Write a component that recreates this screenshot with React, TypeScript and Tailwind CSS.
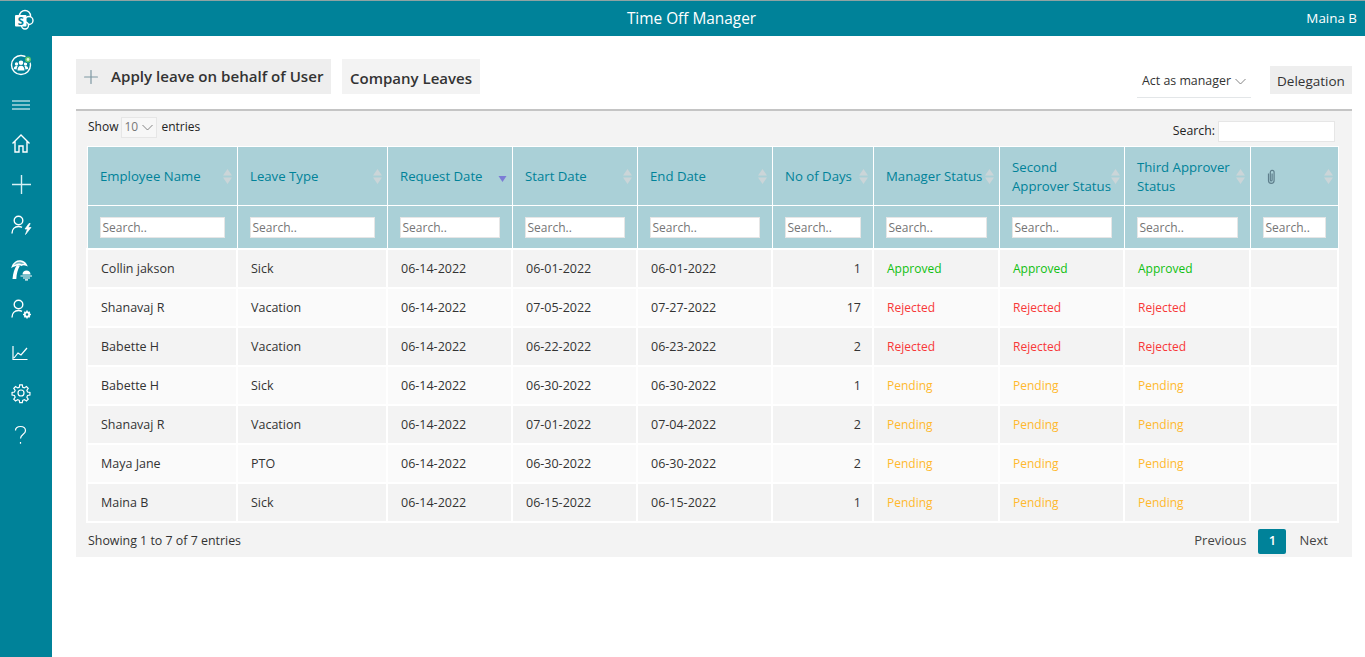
import React from 'react';
import { Plus } from 'lucide-react';

const columns = [
  { label: 'Employee Name', width: 'w-[150px]', input: 'w-[125px]' },
  { label: 'Leave Type', width: 'w-[150px]', input: 'w-[125px]' },
  { label: 'Request Date', width: 'w-[125px]', input: 'w-[100px]', sorted: true },
  { label: 'Start Date', width: 'w-[125px]', input: 'w-[100px]' },
  { label: 'End Date', width: 'w-[135px]', input: 'w-[110px]' },
  { label: 'No of Days', width: 'w-[101px]', input: 'w-[76px]' },
  { label: 'Manager Status', width: 'w-[126px]', input: 'w-[101px]' },
  { label: 'Second', label2: 'Approver Status', width: 'w-[125px]', input: 'w-[100px]' },
  { label: 'Third Approver', label2: 'Status', width: 'w-[126px]', input: 'w-[101px]' },
  { label: '', width: 'w-[88px]', input: 'w-[63px]', clip: true },
];

const rows = [
  ['Collin jakson', 'Sick', '06-14-2022', '06-01-2022', '06-01-2022', '1', 'Approved'],
  ['Shanavaj R', 'Vacation', '06-14-2022', '07-05-2022', '07-27-2022', '17', 'Rejected'],
  ['Babette H', 'Vacation', '06-14-2022', '06-22-2022', '06-23-2022', '2', 'Rejected'],
  ['Babette H', 'Sick', '06-14-2022', '06-30-2022', '06-30-2022', '1', 'Pending'],
  ['Shanavaj R', 'Vacation', '06-14-2022', '07-01-2022', '07-04-2022', '2', 'Pending'],
  ['Maya Jane', 'PTO', '06-14-2022', '06-30-2022', '06-30-2022', '2', 'Pending'],
  ['Maina B', 'Sick', '06-14-2022', '06-15-2022', '06-15-2022', '1', 'Pending'],
];

const statusColor: Record<string, string> = {
  Approved: 'text-[#10c010]',
  Rejected: 'text-[#f83838]',
  Pending: 'text-[#ffb92e]',
};

const SortArrows = () => (
  <svg width="9" height="15" viewBox="0 0 9 15" className="shrink-0">
    <path d="M4.500 0 L9 6.500 H0 Z" fill="#cbd5d8" />
    <path d="M4.500 15 L9 8.500 H0 Z" fill="#cbd5d8" />
  </svg>
);

const SortDown = () => (
  <svg width="9" height="15" viewBox="0 0 9 15" className="shrink-0">
    <path d="M4.500 13 L8.500 7 H0.500 Z" fill="#7c7cd6" />
  </svg>
);

const Chevron = () => (
  <svg width="11" height="7" viewBox="0 0 11 7" fill="none" stroke="#777" strokeWidth="0.9" className="shrink-0">
    <path d="M0.500 1l5 5 5-5" />
  </svg>
);

const sideIcons = [
  {
    mt: 'mt-[17px]',
    icon: (
      <>
        <circle cx="12" cy="12" r="9.500" />
        <g fill="white" stroke="none">
          <circle cx="12" cy="9.800" r="2.300" />
          <circle cx="7.500" cy="11" r="1.700" />
          <circle cx="16.500" cy="11" r="1.700" />
          <path d="M8.500 17.500c0-3 1.300-4.800 3.500-4.800s3.500 1.800 3.500 4.800z" />
          <path d="M4.800 16c0-1.800.9-3 2.700-3 .5 0 .8.100 1.100.3-.6 1-.9 1.900-1 3.100z" />
          <path d="M19.200 16c0-1.800-.9-3-2.700-3-.5 0-.8.100-1.100.3.600 1 .9 1.900 1 3.100z" />
        </g>
        <circle cx="19" cy="6.500" r="3.800" stroke="none" fill="#008299" />
        <circle cx="19" cy="6.500" r="2.200" stroke="#5cc46a" fill="#d8f5dc" strokeWidth="1.500" />
      </>
    ),
  },
  { mt: 'mt-[16px]', icon: <path d="M3 8h18M3 12h18M3 16h18" strokeWidth="1" /> },
  { mt: 'mt-[14px]', icon: <path d="M3.500 12.500 12 4l8.500 8.500M6 10.500V21h4v-6h4v6h4V10.500" /> },
  { mt: 'mt-[18px]', icon: <path d="M12.500 2v19M3 11.500h19" stroke="#d8f1f5" /> },
  {
    mt: 'mt-[16px]',
    icon: (
      <>
        <circle cx="9.500" cy="7.500" r="4.300" />
        <path d="M3 20.500c0-4 2.500-7 6.500-7 1.300 0 2.500.3 3.500.9" />
        <path d="M20 10.500l-4 5.500h2.500l-2 5.500 5.500-7h-2.800l2-4z" fill="white" strokeWidth="0.7" />
      </>
    ),
  },
  {
    mt: 'mt-[21px]',
    icon: (
      <>
        <path d="M3.500 8.500C4.500 5 8 2.500 11.500 3c2.800.4 4.800 1.800 5.800 4-1.800-.8-3.600-.8-5 .2-1-.9-2.300-1.100-3.600-.7C7 7 5 7.500 3.500 8.500z" fill="white" fillOpacity="0.45" strokeWidth="1.500" />
        <path d="M8 7C5.500 10.500 4 15 3.500 21h3.800c.2-5 1.500-10 3.700-13.500" fill="white" stroke="none" />
        <path d="M13.500 16.500c0-2.500 1.800-4 4-4s4 1.500 4 4z" fill="white" stroke="none" />
        <path d="M11.500 18h11.500M14 20h7M16 21.800h3" strokeWidth="1.200" />
      </>
    ),
  },
  {
    mt: 'mt-[15px]',
    icon: (
      <>
        <circle cx="9.500" cy="7.500" r="4.300" />
        <path d="M3 20.500c0-4 2.500-7 6.500-7 1.300 0 2.500.3 3.500.9" />
        <circle cx="18" cy="17.500" r="2.200" strokeWidth="1.800" />
        <path d="M18 13.500v1.500M18 20v1.500M14 17.500h1.500M20.500 17.500H22M15.300 14.800l1 1M19.700 19.200l1 1M15.300 20.200l1-1M19.700 15.800l1-1" strokeWidth="1.500" />
      </>
    ),
  },
  { mt: 'mt-[20px]', icon: <path d="M4 5v13.500h14.500M5 17l4-5 3 2 6-7" strokeWidth="1.200" /> },
  {
    mt: 'mt-[16px]',
    icon: (
      <g transform="translate(12 12) scale(.86) translate(-12 -12)">
        <circle cx="12" cy="12" r="3.500" />
        <path d="M10.500 2.500h3l.5 2.800 1.900.8 2.400-1.600 2.100 2.100-1.600 2.400.8 1.900 2.800.5v3l-2.800.5-.8 1.900 1.600 2.400-2.100 2.100-2.400-1.600-1.900.8-.5 2.800h-3l-.5-2.800-1.900-.8-2.400 1.600-2.100-2.100 1.600-2.400-.8-1.900-2.800-.5v-3l2.800-.5.8-1.900-1.600-2.400 2.100-2.100 2.400 1.600 1.900-.8z" />
      </g>
    ),
  },
  { mt: 'mt-[16px]', icon: <path d="M6.500 9.500c0-2.500 2-4 5-4s5 1.700 5 4.300c0 3.500-5 3.500-5 7.700M11.500 21v1.800" strokeWidth="1.200" /> },
];

const App: React.FC = () => {
  return (
    <div className="h-[657px] overflow-hidden bg-white font-['Open_Sans',sans-serif] text-[13px] text-[#333]">
      {/* Header */}
      <div className="relative flex h-9 items-center justify-center border-t border-[#8fa3a3] bg-[#008299] pl-[18px] text-white">
        <svg width="24" height="24" viewBox="0 0 24 24" className="absolute left-[10px] top-[7px]">
          <circle cx="15" cy="8" r="5.500" fill="none" stroke="white" strokeWidth="1.400" />
          <circle cx="19" cy="12.500" r="4" fill="#008299" stroke="white" strokeWidth="1.400" />
          <circle cx="15" cy="17.500" r="3.500" fill="#008299" stroke="white" strokeWidth="1.400" />
          <rect x="5" y="7" width="11.500" height="11.500" rx="1" fill="white" />
          <text x="10.800" y="16.500" textAnchor="middle" fontSize="11" fontWeight="700" fill="#008299" fontFamily="Open Sans">S</text>
        </svg>
        <span className="text-[15.4px]">Time Off Manager</span>
        <span className="absolute right-2 text-[13.4px] font-medium">Maina B</span>
      </div>

      <div className="flex h-[621px]">
        {/* Sidebar */}
        <div className="flex w-[52px] shrink-0 flex-col items-center bg-[#008299] pr-[10px]">
          {sideIcons.map((item, i) => (
            <svg
              key={i}
              width="24"
              height="24"
              viewBox="0 0 24 24"
              fill="none"
              stroke="white"
              strokeWidth="1.400"
              className={item.mt}
            >
              {item.icon}
            </svg>
          ))}
        </div>

        {/* Main */}
        <div className="min-w-0 flex-1 pl-6 pr-[13px] pt-[23px]">
          <div className="flex h-[50px] items-start">
            <button className="flex h-[35px] w-[255px] items-center gap-[9px] bg-[#eeeeee] pl-[4px] text-[15.1px] font-semibold text-[#333]">
              <Plus size={22} strokeWidth={1.3} className="text-[#7d97a2]" />
              Apply leave on behalf of User
            </button>
            <button className="ml-[11px] h-[35px] w-[138px] bg-[#f3f3f3] pt-[4px] text-[15px] font-semibold text-[#333]">
              Company Leaves
            </button>
            <div className="ml-auto flex h-[39px] w-[114px] items-center justify-center gap-[4px] border-b border-[#e3e6e8] pt-[6px] text-[12.4px]">
              <span>Act as manager</span>
              <Chevron />
            </div>
            <button className="ml-[19px] mt-[7px] h-[28px] w-[82px] bg-[#eeeeee] pt-[3px] text-[13.5px]">Delegation</button>
          </div>

          <div className="h-[448px] border-t-2 border-[#c4c4c4] bg-[#f3f3f3] px-3">
            <div className="flex h-[35px] justify-between pt-[6px]">
              <div className="flex h-5 items-center text-[12px] text-[#222]">
                <span>Show</span>
                <div className="ml-[3px] mr-[4px] flex h-[21px] w-[36px] items-center justify-between border border-[#e6e6e6] bg-[#f7f7f7] pl-[2px] pr-[3px] text-[#777]">
                  <span>10</span>
                  <Chevron />
                </div>
                <span>entries</span>
              </div>
              <div className="mr-[5px] mt-[4px] flex h-[21px] items-center gap-[3px] text-[12.3px] text-[#222]">
                <span>Search:</span>
                <div className="h-[21px] w-[117px] border border-[#e6e6e6] bg-white" />
              </div>
            </div>

            <table className="ml-[-2px] w-[1251px] table-fixed border-collapse">
              <colgroup>
                {columns.map((c, i) => (
                  <col key={i} className={c.width} />
                ))}
              </colgroup>
              <thead>
                <tr className="bg-[#aad0d7] text-[#008299]">
                  {columns.map((c, i) => (
                    <th key={i} className="h-[59px] border border-white pb-0 pl-[12.500px] pr-[5px] pt-[1px] text-left text-[13.2px] font-normal leading-[19px]">
                      <div className="flex items-center justify-between">
                        {c.clip ? (
                          <svg width="11" height="16" viewBox="0 0 11 16" fill="none" stroke="#5f7f8c" strokeWidth="1.200" className="ml-[3px] shrink-0">
                            <path d="M2.500 4.500v7a2.800 2.800 0 0 0 5.600 0V3.200a1.900 1.900 0 0 0-3.800 0V11a.9.9 0 0 0 1.800 0V4.500" />
                          </svg>
                        ) : (
                          <span className="whitespace-nowrap">
                            {c.label}
                            {c.label2 && <br />}
                            {c.label2}
                          </span>
                        )}
                        {c.sorted ? <SortDown /> : <SortArrows />}
                      </div>
                    </th>
                  ))}
                </tr>
                <tr className="bg-[#aad0d7]">
                  {columns.map((c, i) => (
                    <th key={i} className="h-[43px] border border-white pb-0 pl-3 pr-0 pt-[1px] text-left font-normal">
                      <div className={`flex h-[21px] items-center border border-[#e6e6e6] bg-white pl-[2px] pt-[2px] text-[12px] text-[#757575] ${c.input}`}>Search..</div>
                    </th>
                  ))}
                </tr>
              </thead>
              <tbody>
                {rows.map((r, ri) => (
                  <tr key={ri} className={ri % 2 === 0 ? 'bg-[#f3f3f3]' : 'bg-[#fafafa]'}>
                    {columns.map((c, ci) => {
                      const status = ci >= 6 && ci <= 8;
                      const value = status ? r[6] : ci < 6 ? r[ci] : '';
                      return (
                        <td
                          key={ci}
                          className={`h-[39px] border-2 border-white pb-0 pl-[13px] pr-[11px] pt-[2px] ${status ? 'text-[12px]' : 'text-[12.5px]'} ${ci === 5 ? 'text-right' : ''} ${status ? statusColor[r[6]] : 'text-[#333]'}`}
                        >
                          {value}
                        </td>
                      );
                    })}
                  </tr>
                ))}
              </tbody>
            </table>

            <div className="flex items-start justify-between pt-[6px]">
              <span className="mt-[3px] text-[12.4px] text-[#333]">Showing 1 to 7 of 7 entries</span>
              <div className="flex items-center pr-[12px] text-[13px] text-[#444]">
                <span>Previous</span>
                <span className="ml-3 flex h-[25px] w-[28px] items-center justify-center rounded-[2px] bg-[#008299] font-semibold text-white">1</span>
                <span className="ml-[13px]">Next</span>
              </div>
            </div>
          </div>
        </div>
      </div>
    </div>
  );
};

export default App;
